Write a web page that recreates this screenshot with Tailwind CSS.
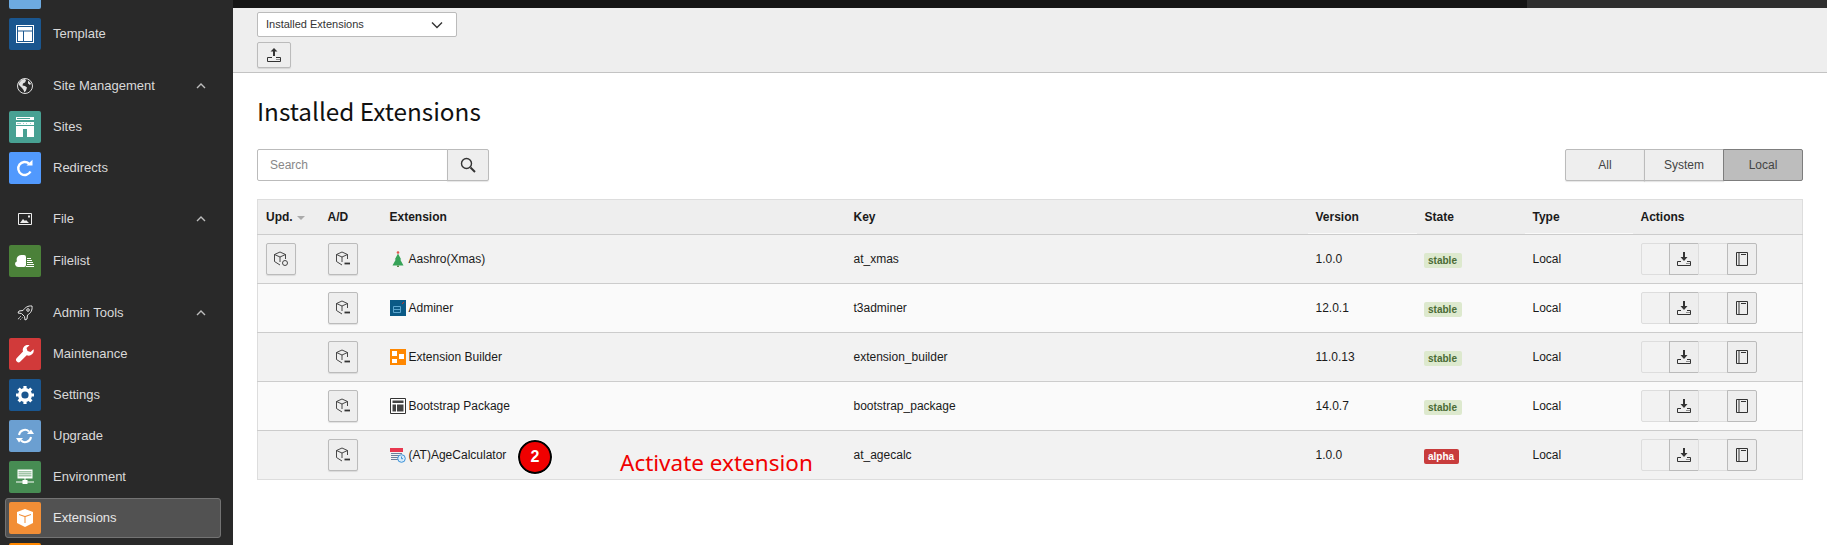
<!DOCTYPE html>
<html lang="en">
<head>
<meta charset="utf-8">
<title>Installed Extensions</title>
<script src="https://cdn.jsdelivr.net/npm/@tailwindcss/browser@4"></script>
</head>
<body class="h-[545px] w-[1827px] overflow-hidden bg-white font-['Liberation_Sans',Arial,sans-serif] text-[12px] text-[#1a1a1a]">
<div class="flex h-[545px] w-[1827px]">
  <!-- Sidebar -->
  <aside class="flex h-[545px] w-[233px] shrink-0 flex-col overflow-hidden bg-[#292929] text-[13px] text-[#d9d9d9]">
    <div class="-mt-[23px] flex h-8 items-center pl-[9px]"><span class="block size-8 rounded-[2px] bg-[#6daae0]"></span></div>
    <div class="mt-[9px] flex h-8 items-center gap-3 pl-[9px]">
      <span class="flex size-8 items-center justify-center rounded-[2px] bg-[#1a568f]"><svg class="size-[18px]" viewBox="0 0 18 18" fill="none"><path fill="#fff" d="M0 0h18v18H0z"/><path fill="#1a568f" d="M1 1h16v16H1z"/><path fill="#fff" d="M2 2h14v3.500H2zM2 6.500h5V16H2zM8 6.500h8V16H8z"/></svg></span>
      <span>Template</span>
    </div>

    <div class="mt-5 flex h-8 items-center gap-3 pl-[9px] pr-[26px]">
      <span class="flex size-8 items-center justify-center"><svg class="size-4" viewBox="0 0 16 16"><circle cx="8" cy="8" r="7.500" fill="#292929" stroke="#e0e0e0"/><path fill="#e0e0e0" d="M5 1.500 8 1l1 1.500-1 2-2 1-.500 2 2.500.500 2 1.500-1 3-1.500 2-1-2.500-1.500-2L2 7 1.500 5.500zM11 2.500l3 3-1 1.500-2-1.500z"/></svg></span>
      <span class="flex-1">Site Management</span>
      <svg class="size-3" viewBox="0 0 12 12" fill="none" stroke="#bdbdbd" stroke-width="1.400"><path d="M2 8l4-4 4 4"/></svg>
    </div>
    <div class="mt-[9px] flex h-8 items-center gap-3 pl-[9px]">
      <span class="flex size-8 items-center justify-center rounded-[2px] bg-[#48a193]"><svg class="size-[20px]" viewBox="0 0 18 20"><path fill="#fff" fill-rule="evenodd" d="M0 0h18v3H0zM0 5h18v3H0zM0 9h18v11h-7v-8H7v8H0z"/><path fill="#48a193" d="M1 1h13v1H1zM1 6.500h4v.600H1zM7 6.500h1v.600H7zM10 6.500h1v.600h-1zM14 6.500h1v.600h-1z"/></svg></span>
      <span>Sites</span>
    </div>
    <div class="mt-[9px] flex h-8 items-center gap-3 pl-[9px]">
      <span class="flex size-8 items-center justify-center rounded-[2px] bg-[#5199fd]"><svg class="size-5" viewBox="0 0 20 20" fill="none"><path stroke="#fff" stroke-width="2.400" d="M15.500 13.500A6.500 6.500 0 1 1 14 5.500"/><path fill="#fff" d="M11.500 7.500h6V1.800z"/></svg></span>
      <span>Redirects</span>
    </div>

    <div class="mt-[19px] flex h-8 items-center gap-3 pl-[9px] pr-[26px]">
      <span class="flex size-8 items-center justify-center"><svg class="size-[14px]" viewBox="0 0 14 12"><path fill="none" stroke="#eee" d="M.5.500h13v11H.5z"/><path fill="#eee" d="M2 10l3-4 2 2 1-1 3 3zM10 2.500h2v2h-2z"/></svg></span>
      <span class="flex-1">File</span>
      <svg class="size-3" viewBox="0 0 12 12" fill="none" stroke="#bdbdbd" stroke-width="1.400"><path d="M2 8l4-4 4 4"/></svg>
    </div>
    <div class="mt-[10px] flex h-8 items-center gap-3 pl-[9px]">
      <span class="flex size-8 items-center justify-center rounded-[2px] bg-[#4b8139]"><svg class="size-5" viewBox="0 0 20 14"><path fill="#fff" d="M3 13a3 3 0 0 1-1-5.800A4.500 4.500 0 0 1 6.500 1H9a2 2 0 0 1 2 2v8a2 2 0 0 1-2 2zM12 4h4v1h-4zM12 6h5v1h-5zM12 8h6v1h-6zM12 10h7v1h-7zM11 12h8v1h-8z"/></svg></span>
      <span>Filelist</span>
    </div>

    <div class="mt-5 flex h-8 items-center gap-3 pl-[9px] pr-[26px]">
      <span class="flex size-8 items-center justify-center"><svg class="size-4" viewBox="0 0 16 16" fill="none" stroke="#e8e8e8"><path d="M15 1c-4-.500-7 1.500-9 4.500L2 6 1 8l3.500.500 3 3L8 15l2-1 .500-4C14 8 15.500 5 15 1z"/><path d="M4 11l-3 3M5.500 12.500 3 15M2 13l-1 2" stroke-dasharray="1 1"/><circle cx="11" cy="5" r="1.300"/></svg></span>
      <span class="flex-1">Admin Tools</span>
      <svg class="size-3" viewBox="0 0 12 12" fill="none" stroke="#bdbdbd" stroke-width="1.400"><path d="M2 8l4-4 4 4"/></svg>
    </div>
    <div class="mt-[9px] flex h-8 items-center gap-3 pl-[9px]">
      <span class="flex size-8 items-center justify-center rounded-[2px] bg-[#d13a3a]"><svg class="size-[18px]" viewBox="0 0 18 18"><path fill="#fff" d="M17.500 4.200 14.500 7l-3-1-1-3L13.600.300A5 5 0 0 0 7 6.500L.800 13a2.400 2.400 0 0 0 3.600 3.500l6.300-6.300a5 5 0 0 0 6.800-6z"/></svg></span>
      <span>Maintenance</span>
    </div>
    <div class="mt-[9px] flex h-8 items-center gap-3 pl-[9px]">
      <span class="flex size-8 items-center justify-center rounded-[2px] bg-[#1a568f]"><svg class="size-[18px]" viewBox="0 0 18 18"><circle cx="9" cy="9" r="5.300" fill="none" stroke="#fff" stroke-width="3.400"/><path stroke="#fff" stroke-width="3.200" d="M9 0v3M9 15v3M0 9h3M15 9h3M2.600 2.600l2.100 2.100M13.300 13.300l2.100 2.100M2.600 15.400l2.100-2.100M13.300 4.700l2.100-2.100"/></svg></span>
      <span>Settings</span>
    </div>
    <div class="mt-[9px] flex h-8 items-center gap-3 pl-[9px]">
      <span class="flex size-8 items-center justify-center rounded-[2px] bg-[#6b9fd1]"><svg class="size-[18px]" viewBox="0 0 18 16" fill="none"><path stroke="#fff" stroke-width="2" d="M3 7a6 6 0 0 1 10-3.500M15 9a6 6 0 0 1-10 3.500"/><path fill="#fff" d="M11 6h7L15 1.500zM7 10H0l3 4.500z"/></svg></span>
      <span>Upgrade</span>
    </div>
    <div class="mt-[9px] flex h-8 items-center gap-3 pl-[9px]">
      <span class="flex size-8 items-center justify-center rounded-[2px] bg-[#478c53]"><svg class="size-[18px]" viewBox="0 0 18 15"><path fill="#fff" d="M1.500 0h15v9h-15zM0 12h6.500v-1.500h5V12H18v1h-6.500v1.500h-5V13H0zM8.500 9h1v2h-1z"/><path fill="#478c53" d="M2.500 2h13v.700h-13zM2.500 4h13v.700h-13zM2.500 6h13v.700h-13z"/></svg></span>
      <span>Environment</span>
    </div>
    <div class="relative mt-[9px] flex h-8 items-center gap-3 pl-[9px]">
      <span class="absolute -top-1 left-[5px] h-10 w-[216px] rounded-[3px] border border-[#737373] bg-[#525252]"></span>
      <span class="relative flex size-8 items-center justify-center rounded-[2px] bg-[#f28e36]"><svg class="size-[18px]" viewBox="0 0 18 18"><path fill="#fff" d="M9 0l8 3v11l-8 4-8-4V3z"/><path fill="#f28e36" d="M3 5l6 2 6-2v1L9.500 8v6h-1V8L3 6z"/></svg></span>
      <span class="relative text-[#e6e6e6]">Extensions</span>
    </div>
    <div class="mt-[9px] flex h-8 items-center pl-[9px]"><span class="block size-8 rounded-[2px] bg-[#ff8700]"></span></div>
  </aside>

  <!-- Main -->
  <main class="relative flex h-[545px] min-w-0 flex-1 flex-col">
    <div class="flex h-2 shrink-0">
      <div class="w-[1294px] bg-[#151515]"></div>
      <div class="flex-1 bg-[#2f2f2f]"></div>
    </div>
    <div class="flex h-[65px] shrink-0 flex-col items-start gap-[5px] border-b border-[#c3c3c3] bg-[#eeeeee] pl-6 pt-1">
      <div class="flex h-[25px] w-[200px] items-center justify-between rounded-[2px] border border-[#bbbbbb] bg-white pl-2 pr-[13px] text-[11px] text-[#333]">
        <span>Installed Extensions</span>
        <svg class="size-3" viewBox="0 0 12 12" fill="none" stroke="#333" stroke-width="1.400"><path d="M1 3.500l5 5 5-5"/></svg>
      </div>
      <button class="flex h-[26px] w-[34px] items-center justify-center rounded-[2px] border border-[#bbbbbb] bg-[#eeeeee] shadow-[0_1px_1px_rgba(0,0,0,0.1)]">
        <svg class="size-[14px]" viewBox="0 0 14 14" fill="none"><path fill="#333" d="M7 0l3.500 3.500H8V8H6V3.500H3.500z"/><path stroke="#333" d="M5 9.500H.5v4h13v-4H9M9.500 11.500h1M11.500 11.500h1"/></svg>
      </button>
    </div>

    <div class="flex-1 pl-6 pr-6">
      <h1 class="mt-[22px] font-['Noto_Sans_CJK_SC','Noto_Sans',sans-serif] text-[24.3px] leading-[32px] text-[#111]">Installed Extensions</h1>

      <div class="mt-[22px] flex h-8 items-stretch justify-between">
        <div class="flex">
          <div class="flex w-[191px] items-center rounded-l-[2px] border border-[#bbbbbb] bg-white pl-[12px] text-[#888]">Search</div>
          <button class="-ml-px flex w-[42px] items-center justify-center rounded-r-[2px] border border-[#bbbbbb] bg-[#eeeeee] shadow-[0_1px_1px_rgba(0,0,0,0.1)]">
            <svg class="size-4" viewBox="0 0 16 16" fill="none" stroke="#333" stroke-width="1.400"><circle cx="6.500" cy="6.500" r="5"/><path stroke-width="2" d="M10.500 10.500l4.500 4.500"/></svg>
          </button>
        </div>
        <div class="flex w-[238px] text-[#444]">
          <button class="flex-1 rounded-l-[2px] border border-[#bbbbbb] bg-[#eeeeee] shadow-[0_1px_1px_rgba(0,0,0,0.1)]">All</button>
          <button class="-ml-px flex-1 border border-[#bbbbbb] bg-[#eeeeee] shadow-[0_1px_1px_rgba(0,0,0,0.1)]">System</button>
          <button class="-ml-px flex-1 rounded-r-[2px] border border-[#7d7d7d] bg-[#bdbdbd]">Local</button>
        </div>
      </div>

      <table class="mt-[18px] w-[1546px] table-fixed border-collapse border border-[#dddddd]">
        <colgroup>
          <col class="w-[62px]"><col class="w-[61px]"><col class="w-[464px]"><col class="w-[463px]"><col class="w-[109px]"><col class="w-[108px]"><col class="w-[108px]"><col>
        </colgroup>
        <thead>
          <tr class="h-[35px] border-b border-[#cccccc] bg-[#eeeeee] text-left font-bold">
            <th class="pl-[8px]">Upd. <span class="relative -top-px ml-px inline-block border-x-[4px] border-t-[4px] border-x-transparent border-t-[#aaaaaa]"></span></th>
            <th class="pl-[8px]">A/D</th><th class="pl-[9px]">Extension</th><th class="pl-[9px]">Key</th><th class="pl-[8px] shadow-[inset_0_-1px_0_#fafafa]">Version</th><th class="pl-[8px]">State</th><th class="pl-[8px] shadow-[inset_0_-1px_0_#fafafa]">Type</th><th class="pl-[8px]">Actions</th>
          </tr>
        </thead>
        <tbody>
          <tr class="h-[49px] border-b border-[#cccccc] bg-[#f2f2f2]">
            <td class="pl-[8px]"><button class="flex h-8 w-[30px] items-center justify-center rounded-[2px] border border-[#bbbbbb] bg-[#eeeeee] shadow-[0_1px_1px_rgba(0,0,0,0.1)]"><svg class="size-[16px]" viewBox="0 0 16 16" fill="none" stroke="#333" stroke-width=".900"><path d="M7 1 1.500 3.500v7L7 14M7 1l5.500 2.500V8M1.500 3.500 7 6l5.500-2.500M7 6v5"/><circle cx="12" cy="12" r="2.500"/></svg></button></td>
            <td class="pl-[8px]"><button class="flex h-8 w-[30px] items-center justify-center rounded-[2px] border border-[#bbbbbb] bg-[#eeeeee] shadow-[0_1px_1px_rgba(0,0,0,0.1)]"><svg class="size-[16px]" viewBox="0 0 16 16" fill="none" stroke="#333" stroke-width=".900"><path d="M7 1 1.500 3.500v7L7 14M7 1l5.500 2.500V8M1.500 3.500 7 6l5.500-2.500M7 6v5"/><path stroke-width="1.800" d="M9.500 12.500h5.500"/></svg></button></td>
            <td class="pl-[9px]"><div class="flex items-center gap-[3px]"><svg class="size-4 shrink-0" viewBox="0 0 16 16"><path fill="#37a358" d="M8 2.500 4.800 8.500h1L2.500 14.500h11L10.200 8.500h1z"/><path fill="#5c8a4a" d="M7 14.500h2V16H7z"/><circle cx="8" cy="1.500" r="1.300" fill="#e0564f"/></svg>Aashro(Xmas)</div></td>
            <td class="pl-[9px]">at_xmas</td><td class="pl-[8px]">1.0.0</td>
            <td class="pl-[7px]"><span class="inline-block h-[15px] w-[38px] translate-y-px rounded-[2px] bg-[#dde9ce] text-center text-[10px] font-bold leading-[15px] text-[#4a6b35]">stable</span></td>
            <td class="pl-[8px]">Local</td>
            <td class="pl-[8px]"><div class="flex w-[116px] h-8"><span class="flex-1 rounded-l-[2px] border border-[#dddddd] bg-[#f2f2f2]"></span><button class="-ml-px flex w-[30px] items-center justify-center border border-[#bbbbbb] bg-[#eeeeee]"><svg class="size-[14px]" viewBox="0 0 14 14" fill="none"><path fill="#333" d="M6 0h2v5h2.500L7 9 3.500 5H6z"/><path stroke="#333" d="M4 9.500H.5v4h13v-4H10M9.500 11.500h1M11.500 11.500h1"/></svg></button><span class="-ml-px flex-1 border border-[#dddddd] bg-[#f2f2f2]"></span><button class="-ml-px flex w-[30px] items-center justify-center rounded-r-[2px] border border-[#bbbbbb] bg-[#eeeeee]"><svg class="size-[14px]" viewBox="0 0 14 14" fill="none" stroke="#333"><path d="M1.500.500h11v13h-11zM4 .500v13M6 2.500h5"/></svg></button></div></td>
          </tr>
          <tr class="h-[49px] border-b border-[#cccccc] bg-[#fafafa]">
            <td></td>
            <td class="pl-[8px]"><button class="flex h-8 w-[30px] items-center justify-center rounded-[2px] border border-[#bbbbbb] bg-[#eeeeee] shadow-[0_1px_1px_rgba(0,0,0,0.1)]"><svg class="size-[16px]" viewBox="0 0 16 16" fill="none" stroke="#333" stroke-width=".900"><path d="M7 1 1.500 3.500v7L7 14M7 1l5.500 2.500V8M1.500 3.500 7 6l5.500-2.500M7 6v5"/><path stroke-width="1.800" d="M9.500 12.500h5.500"/></svg></button></td>
            <td class="pl-[9px]"><div class="flex items-center gap-[3px]"><svg class="size-4 shrink-0" viewBox="0 0 16 16"><path fill="#0b5a86" d="M0 0h16v16H0z"/><path fill="none" stroke="#5ca6cf" d="M3.500 6.500h7v6h-7zM3.500 9.500h7"/><path stroke="#c0392b" d="M12 4l2-2"/></svg>Adminer</div></td>
            <td class="pl-[9px]">t3adminer</td><td class="pl-[8px]">12.0.1</td>
            <td class="pl-[7px]"><span class="inline-block h-[15px] w-[38px] translate-y-px rounded-[2px] bg-[#dde9ce] text-center text-[10px] font-bold leading-[15px] text-[#4a6b35]">stable</span></td>
            <td class="pl-[8px]">Local</td>
            <td class="pl-[8px]"><div class="flex w-[116px] h-8"><span class="flex-1 rounded-l-[2px] border border-[#dddddd] bg-[#f2f2f2]"></span><button class="-ml-px flex w-[30px] items-center justify-center border border-[#bbbbbb] bg-[#eeeeee]"><svg class="size-[14px]" viewBox="0 0 14 14" fill="none"><path fill="#333" d="M6 0h2v5h2.500L7 9 3.500 5H6z"/><path stroke="#333" d="M4 9.500H.5v4h13v-4H10M9.500 11.500h1M11.500 11.500h1"/></svg></button><span class="-ml-px flex-1 border border-[#dddddd] bg-[#f2f2f2]"></span><button class="-ml-px flex w-[30px] items-center justify-center rounded-r-[2px] border border-[#bbbbbb] bg-[#eeeeee]"><svg class="size-[14px]" viewBox="0 0 14 14" fill="none" stroke="#333"><path d="M1.500.500h11v13h-11zM4 .500v13M6 2.500h5"/></svg></button></div></td>
          </tr>
          <tr class="h-[49px] border-b border-[#cccccc] bg-[#f2f2f2]">
            <td></td>
            <td class="pl-[8px]"><button class="flex h-8 w-[30px] items-center justify-center rounded-[2px] border border-[#bbbbbb] bg-[#eeeeee] shadow-[0_1px_1px_rgba(0,0,0,0.1)]"><svg class="size-[16px]" viewBox="0 0 16 16" fill="none" stroke="#333" stroke-width=".900"><path d="M7 1 1.500 3.500v7L7 14M7 1l5.500 2.500V8M1.500 3.500 7 6l5.500-2.500M7 6v5"/><path stroke-width="1.800" d="M9.500 12.500h5.500"/></svg></button></td>
            <td class="pl-[9px]"><div class="flex items-center gap-[3px]"><svg class="size-4 shrink-0" viewBox="0 0 16 16"><path fill="#ff8700" d="M0 0h16v16H0z"/><path fill="#fff" d="M2 2h5v5H2zM9 5h5v5H9zM2 10h5v4H2z"/></svg>Extension Builder</div></td>
            <td class="pl-[9px]">extension_builder</td><td class="pl-[8px]">11.0.13</td>
            <td class="pl-[7px]"><span class="inline-block h-[15px] w-[38px] translate-y-px rounded-[2px] bg-[#dde9ce] text-center text-[10px] font-bold leading-[15px] text-[#4a6b35]">stable</span></td>
            <td class="pl-[8px]">Local</td>
            <td class="pl-[8px]"><div class="flex w-[116px] h-8"><span class="flex-1 rounded-l-[2px] border border-[#dddddd] bg-[#f2f2f2]"></span><button class="-ml-px flex w-[30px] items-center justify-center border border-[#bbbbbb] bg-[#eeeeee]"><svg class="size-[14px]" viewBox="0 0 14 14" fill="none"><path fill="#333" d="M6 0h2v5h2.500L7 9 3.500 5H6z"/><path stroke="#333" d="M4 9.500H.5v4h13v-4H10M9.500 11.500h1M11.500 11.500h1"/></svg></button><span class="-ml-px flex-1 border border-[#dddddd] bg-[#f2f2f2]"></span><button class="-ml-px flex w-[30px] items-center justify-center rounded-r-[2px] border border-[#bbbbbb] bg-[#eeeeee]"><svg class="size-[14px]" viewBox="0 0 14 14" fill="none" stroke="#333"><path d="M1.500.500h11v13h-11zM4 .500v13M6 2.500h5"/></svg></button></div></td>
          </tr>
          <tr class="h-[49px] border-b border-[#cccccc] bg-[#fafafa]">
            <td></td>
            <td class="pl-[8px]"><button class="flex h-8 w-[30px] items-center justify-center rounded-[2px] border border-[#bbbbbb] bg-[#eeeeee] shadow-[0_1px_1px_rgba(0,0,0,0.1)]"><svg class="size-[16px]" viewBox="0 0 16 16" fill="none" stroke="#333" stroke-width=".900"><path d="M7 1 1.500 3.500v7L7 14M7 1l5.500 2.500V8M1.500 3.500 7 6l5.500-2.500M7 6v5"/><path stroke-width="1.800" d="M9.500 12.500h5.500"/></svg></button></td>
            <td class="pl-[9px]"><div class="flex items-center gap-[3px]"><svg class="size-4 shrink-0" viewBox="0 0 16 16"><path fill="#fff" stroke="#333" d="M.5.500h15v15H.5z"/><path fill="#444" d="M2.500 2.500h11v2.500h-11zM2.500 6.500h3.500v7H2.500zM7 6.500h6.500v7H7z"/></svg>Bootstrap Package</div></td>
            <td class="pl-[9px]">bootstrap_package</td><td class="pl-[8px]">14.0.7</td>
            <td class="pl-[7px]"><span class="inline-block h-[15px] w-[38px] translate-y-px rounded-[2px] bg-[#dde9ce] text-center text-[10px] font-bold leading-[15px] text-[#4a6b35]">stable</span></td>
            <td class="pl-[8px]">Local</td>
            <td class="pl-[8px]"><div class="flex w-[116px] h-8"><span class="flex-1 rounded-l-[2px] border border-[#dddddd] bg-[#f2f2f2]"></span><button class="-ml-px flex w-[30px] items-center justify-center border border-[#bbbbbb] bg-[#eeeeee]"><svg class="size-[14px]" viewBox="0 0 14 14" fill="none"><path fill="#333" d="M6 0h2v5h2.500L7 9 3.500 5H6z"/><path stroke="#333" d="M4 9.500H.5v4h13v-4H10M9.500 11.500h1M11.500 11.500h1"/></svg></button><span class="-ml-px flex-1 border border-[#dddddd] bg-[#f2f2f2]"></span><button class="-ml-px flex w-[30px] items-center justify-center rounded-r-[2px] border border-[#bbbbbb] bg-[#eeeeee]"><svg class="size-[14px]" viewBox="0 0 14 14" fill="none" stroke="#333"><path d="M1.500.500h11v13h-11zM4 .500v13M6 2.500h5"/></svg></button></div></td>
          </tr>
          <tr class="h-[49px] border-b border-[#dddddd] bg-[#f2f2f2]">
            <td></td>
            <td class="pl-[8px]"><button class="flex h-8 w-[30px] items-center justify-center rounded-[2px] border border-[#bbbbbb] bg-[#eeeeee] shadow-[0_1px_1px_rgba(0,0,0,0.1)]"><svg class="size-[16px]" viewBox="0 0 16 16" fill="none" stroke="#333" stroke-width=".900"><path d="M7 1 1.500 3.500v7L7 14M7 1l5.500 2.500V8M1.500 3.500 7 6l5.500-2.500M7 6v5"/><path stroke-width="1.800" d="M9.500 12.500h5.500"/></svg></button></td>
            <td class="pl-[9px]"><div class="flex items-center gap-[3px]"><svg class="size-4 shrink-0" viewBox="0 0 16 16"><path fill="#e8384f" d="M0 1h13v4H0z"/><path fill="#6a7f9a" d="M1 6h11v1H1zM1 8h11v1H1zM1 10h8v1H1zM1 12h7v1H1z"/><circle cx="11.500" cy="11.500" r="3.800" fill="#d8ecfa" stroke="#3d93d8"/><path stroke="#3d93d8" fill="none" d="M11.500 9.500v2.200h1.500"/></svg>(AT)AgeCalculator</div></td>
            <td class="pl-[9px]">at_agecalc</td><td class="pl-[8px]">1.0.0</td>
            <td class="pl-[7px]"><span class="inline-block h-[15px] w-[35px] translate-y-px rounded-[2px] bg-[#c83c3c] text-center text-[10px] font-bold leading-[15px] text-white">alpha</span></td>
            <td class="pl-[8px]">Local</td>
            <td class="pl-[8px]"><div class="flex w-[116px] h-8"><span class="flex-1 rounded-l-[2px] border border-[#dddddd] bg-[#f2f2f2]"></span><button class="-ml-px flex w-[30px] items-center justify-center border border-[#bbbbbb] bg-[#eeeeee]"><svg class="size-[14px]" viewBox="0 0 14 14" fill="none"><path fill="#333" d="M6 0h2v5h2.500L7 9 3.500 5H6z"/><path stroke="#333" d="M4 9.500H.5v4h13v-4H10M9.500 11.500h1M11.500 11.500h1"/></svg></button><span class="-ml-px flex-1 border border-[#dddddd] bg-[#f2f2f2]"></span><button class="-ml-px flex w-[30px] items-center justify-center rounded-r-[2px] border border-[#bbbbbb] bg-[#eeeeee]"><svg class="size-[14px]" viewBox="0 0 14 14" fill="none" stroke="#333"><path d="M1.500.500h11v13h-11zM4 .500v13M6 2.500h5"/></svg></button></div></td>
          </tr>
        </tbody>
      </table>
    </div>

    <!-- Annotation overlay -->
    <span class="absolute left-[285px] top-[440px] flex size-[34px] items-center justify-center rounded-full border-2 border-black bg-[#f00000] text-[16px] font-bold text-white outline outline-1 outline-white/60">2</span>
    <span class="absolute left-[387px] top-[447px] font-['Noto_Sans',sans-serif] text-[22.5px] leading-[32px] text-[#f00000]">Activate extension</span>
  </main>
</div>
</body>
</html>
